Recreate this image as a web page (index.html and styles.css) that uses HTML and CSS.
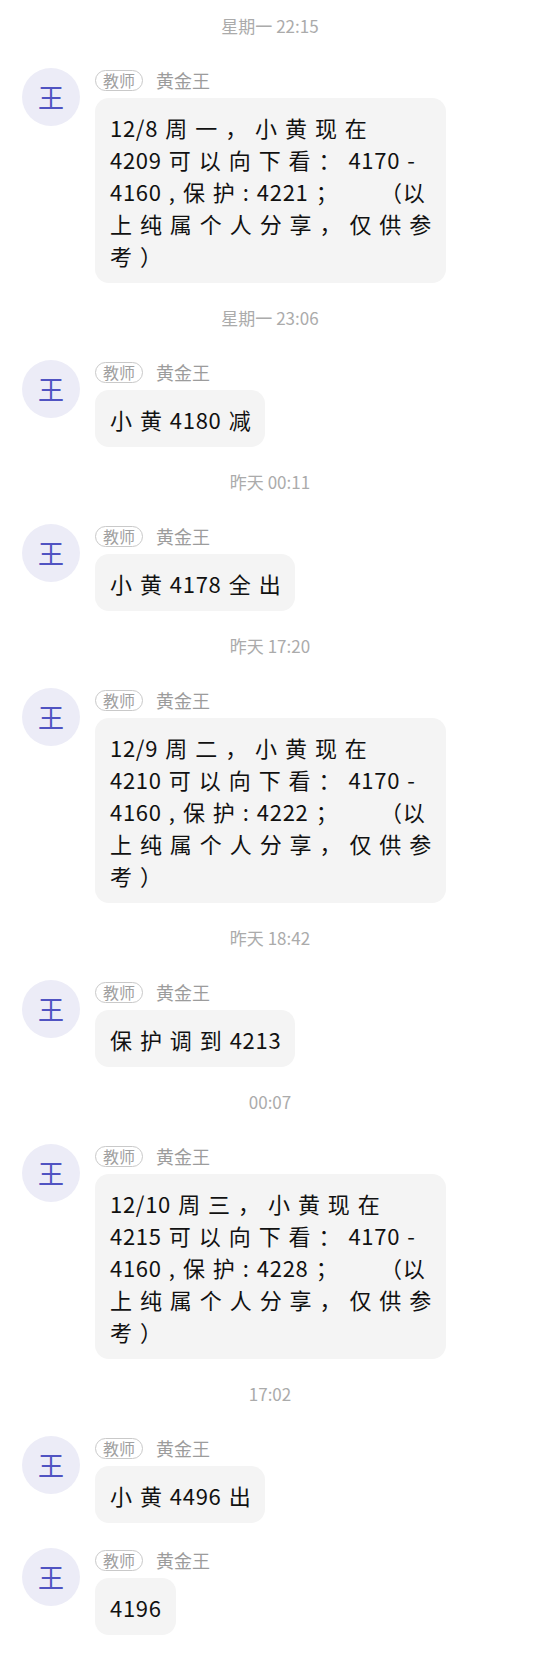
FILE: index.html
```html
<!DOCTYPE html>
<html lang="zh-CN">
    <head>
        <meta charset="utf-8">
        <meta name="viewport" content="width=device-width, initial-scale=1">
        <title>Chat</title>
        <link rel="stylesheet" href="styles.css">
    </head>
    <body>
        <div class="chat">
            <div class="time">星期一 22:15</div>
            <div class="msg">
                <div class="avatar">王</div>
                <div class="body">
                    <div class="meta"><span class="tag">教师</span><span class="name">黄金王</span></div>
                    <div class="bubble">12/8 周 一 ， 小 黄 现 在<br>4209 可 以 向 下 看 ： 4170 -<br>4160 , 保 护 : 4221 ； 　　（以<br>上 纯 属 个 人 分 享 ， 仅 供 参<br>考 ）</div>
                </div>
            </div>

            <div class="time">星期一 23:06</div>
            <div class="msg">
                <div class="avatar">王</div>
                <div class="body">
                    <div class="meta"><span class="tag">教师</span><span class="name">黄金王</span></div>
                    <div class="bubble">小 黄 4180 减</div>
                </div>
            </div>

            <div class="time">昨天 00:11</div>
            <div class="msg">
                <div class="avatar">王</div>
                <div class="body">
                    <div class="meta"><span class="tag">教师</span><span class="name">黄金王</span></div>
                    <div class="bubble">小 黄 4178 全 出</div>
                </div>
            </div>

            <div class="time">昨天 17:20</div>
            <div class="msg">
                <div class="avatar">王</div>
                <div class="body">
                    <div class="meta"><span class="tag">教师</span><span class="name">黄金王</span></div>
                    <div class="bubble">12/9 周 二 ， 小 黄 现 在<br>4210 可 以 向 下 看 ： 4170 -<br>4160 , 保 护 : 4222 ； 　　（以<br>上 纯 属 个 人 分 享 ， 仅 供 参<br>考 ）</div>
                </div>
            </div>

            <div class="time">昨天 18:42</div>
            <div class="msg">
                <div class="avatar">王</div>
                <div class="body">
                    <div class="meta"><span class="tag">教师</span><span class="name">黄金王</span></div>
                    <div class="bubble">保 护 调 到 4213</div>
                </div>
            </div>

            <div class="time">00:07</div>
            <div class="msg">
                <div class="avatar">王</div>
                <div class="body">
                    <div class="meta"><span class="tag">教师</span><span class="name">黄金王</span></div>
                    <div class="bubble">12/10 周 三 ， 小 黄 现 在<br>4215 可 以 向 下 看 ： 4170 -<br>4160 , 保 护 : 4228 ； 　　（以<br>上 纯 属 个 人 分 享 ， 仅 供 参<br>考 ）</div>
                </div>
            </div>

            <div class="time">17:02</div>
            <div class="msg">
                <div class="avatar">王</div>
                <div class="body">
                    <div class="meta"><span class="tag">教师</span><span class="name">黄金王</span></div>
                    <div class="bubble">小 黄 4496 出</div>
                </div>
            </div>
            <div class="msg">
                <div class="avatar">王</div>
                <div class="body">
                    <div class="meta"><span class="tag">教师</span><span class="name">黄金王</span></div>
                    <div class="bubble">4196</div>
                </div>
            </div>
        </div>
    </body>
</html>
```

FILE: styles.css
```css
body {
    margin: 0;
    background: #ffffff;
    font-family: "Noto Sans CJK SC", "Noto Sans", sans-serif;
    color: #111111;
}
.chat {
    padding: 16px 0 0;
}
.time {
    height: 20px;
    line-height: 20px;
    font-size: 17px;
    color: #ababab;
    text-align: center;
    margin-bottom: 32px;
}
.msg {
    display: flex;
    align-items: flex-start;
    gap: 15px;
    padding-left: 22px;
    margin-bottom: 25px;
}
.avatar {
    width: 58px;
    height: 58px;
    flex: none;
    border-radius: 50%;
    background: #ececf7;
    color: #5053c2;
    font-size: 26px;
    line-height: 58px;
    text-align: center;
}
.body {
    display: flex;
    flex-direction: column;
    align-items: flex-start;
}
.meta {
    display: flex;
    align-items: center;
    height: 22px;
    margin-top: 1px;
    margin-bottom: 7px;
}
.tag {
    box-sizing: border-box;
    height: 21px;
    padding: 0 7px;
    border: 1px solid #c9c9c9;
    border-radius: 11px;
    font-size: 16px;
    line-height: 19px;
    color: #a0a0a0;
}
.name {
    margin-left: 13px;
    font-size: 18px;
    color: #9c9c9c;
}
.bubble {
    box-sizing: border-box;
    background: #f4f4f4;
    border-radius: 14px;
    padding: 13px 14px 12px 15px;
    font-size: 22px;
    line-height: 32px;
    letter-spacing: 0.7px;
    word-spacing: 1.6px;
    white-space: nowrap;
}
```
